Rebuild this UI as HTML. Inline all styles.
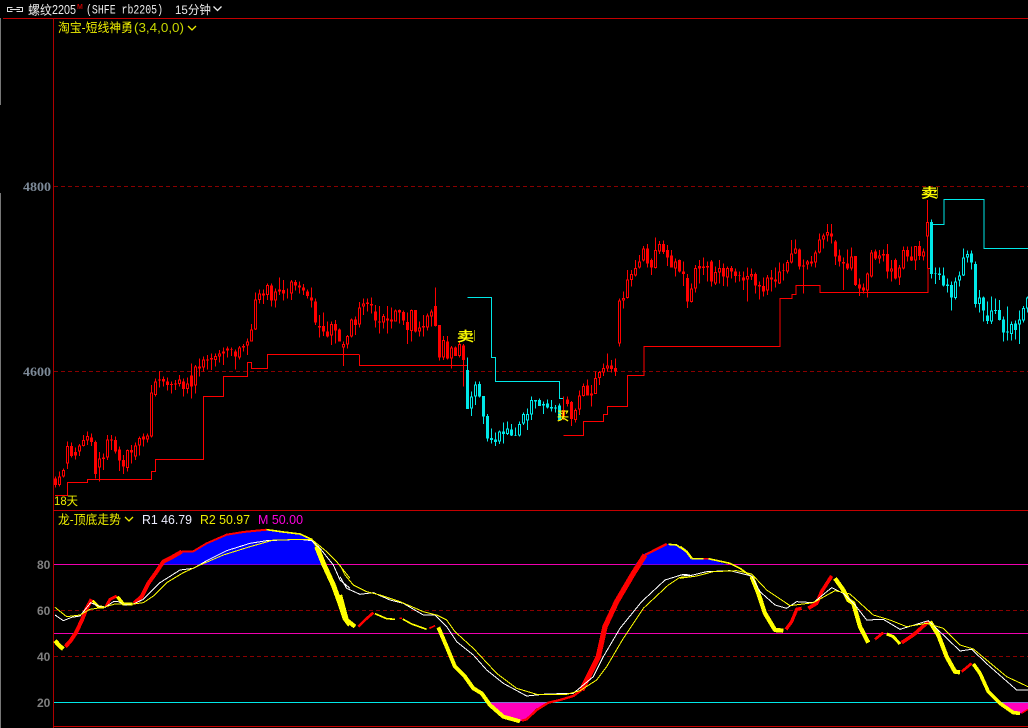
<!DOCTYPE html>
<html><head><meta charset="utf-8"><style>
html,body{margin:0;padding:0;background:#000;width:1028px;height:728px;overflow:hidden}
svg{display:block}
text{font-family:"Liberation Sans","WenQuanYi Zen Hei","Noto Sans CJK SC",sans-serif;white-space:pre}
.m{font-family:"Liberation Mono","WenQuanYi Zen Hei",monospace}
.s{font-family:"Liberation Serif",serif;font-weight:bold}
.w{stroke-width:3;fill:none}
.b{stroke-width:9;fill:none}
.h{stroke-width:3;fill:none;stroke:#000}
.l{fill:none;stroke-width:3}
</style></head><body>
<svg width="1028" height="728" viewBox="0 0 1028 728" xmlns="http://www.w3.org/2000/svg">
<rect width="1028" height="728" fill="#000"/>
<path d="M.5 18V105M.5 193V728" stroke="#777" stroke-width="1"/>
<path d="M3 18.5H1028" stroke="#c40000" stroke-width="1"/>
<path d="M53.5 18V728" stroke="#b00000" stroke-width="1"/>
<path d="M53 510.5H1028M53 726.5H1028" stroke="#c40000" stroke-width="1"/>
<g stroke="#8a0000" stroke-width="1" stroke-dasharray="4 3">
<path d="M54 186.5H1028M54 371.5H1028M54 610.5H1028M54 656.5H1028"/>
</g>
<path d="M54 564.5H1028M54 633.5H1028" stroke="#f000b0" stroke-width="1"/>
<path d="M54 702.5H1028" stroke="#00e8e8" stroke-width="1"/>

<g shape-rendering="crispEdges">
<g transform="translate(50.17,270) scale(.33333)">
<path class="l" stroke="#f00" d="M14 676H52V637H112V628H304V604H316V568H460V379H520V319H592V277H604V295H652V253H927"/>
<path class="w" stroke="#f00" d="M16 620V652M28 605V650M40 595V622M52 515V597M64 518V562M76 532V568M88 522V558M100 495V530M112 484V525M124 490V528M136 512V625M148 546V635M160 550V600M172 495V570M184 495V540M196 500V550M208 530V603M220 555V612M232 538V605M244 525V580M256 518V570M268 500V556M280 490V530M292 490V518M304 345V502M316 325V380M328 303V352M340 320V350M352 322V362M364 335V370M376 330V360M388 315V350M400 325V380M412 322V370M424 280V385M436 285V370M448 265V320M460 260V305M472 255V298M484 250V300M496 250V290M508 240V278M520 232V285M532 230V262M544 232V258M556 238V298M568 228V268M580 222V245M592 205V255M604 162V215M616 68V180M628 58V100M640 58V102M652 40V90M664 40V110M676 55V113M688 22V75M700 30V92M712 55V85M724 30V90M736 30V62M748 35V70M760 42V75M772 58V85M784 52V112M796 85V165M808 135V203M820 128V198M832 155V203M844 155V225M856 150V220M868 175V215"/>
<path class="b" stroke="#f00" d="M16 625V645M28 620V645M40 600V620M52 528V580M64 528V558M76 546V556M88 526V545M100 510V528M112 498V512M124 502V516M136 516V612M148 565V593M160 562V567M172 508V563M184 508V512M196 510V545M208 538V572M220 570V590M232 540V594M244 540V548M256 526V560M268 504V526M280 500V508M292 496V508M304 367V500M316 334V375M328 328V332M340 327V335M352 334V345M364 342V345M376 340V344M388 328V342M400 334V357M412 340V357M424 316V350M436 290V347M448 290V296M460 268V292M472 268V272M484 264V268M496 258V270M508 250V260M520 244V250M532 236V242M544 238V240M556 244V260M568 232V262M580 228V232M592 214V227M604 178V214M616 88V178M628 70V90M640 70V76M652 45V75M664 46V92M676 64V92M688 58V64M700 60V70M712 70V71M724 34V70M736 36V47M748 46V52M760 52V62M772 64V78M784 82V92M796 94V158M808 168V172M820 168V185M832 184V200M844 162V197M856 162V182M868 178V215"/>
<path class="h" d="M28 623V642M40 603V617M52 531V577M88 529V542M100 513V525M112 501V509M148 568V590M172 511V560M232 543V591M256 529V557M268 507V523M292 499V505M304 370V497M316 337V372M388 331V339M412 343V354M436 293V344M460 271V289M496 261V267M508 253V257M568 235V259M592 217V224M604 181V211M616 91V175M628 73V87M652 48V72M676 67V89M724 37V67M844 165V194"/>
</g>
<g transform="translate(340.17,270) scale(.33333)">
<path class="l" stroke="#f00" d="M58 253V286H382"/>
<path class="l" stroke="#00e8e8" d="M382 82H454V262H466V334H658V385H670"/>
<path class="l" stroke="#f00" d="M670 496H730V454H790V433H802V409H862V316H911V229"/>
<path class="w" stroke="#f00" d="M10 215V288M22 195V235M34 145V202M46 140V195M58 96V172M70 85V135M82 85V125M94 82V130M106 105V172M118 108V190M130 132V176M142 108V190M154 112V175M166 118V155M178 118V160M190 122V165M202 128V222M214 118V215M226 120V188M238 155V200M250 135V200M262 130V182M274 118V170M286 52V170M298 165V272M310 198V270M322 198V268M334 228V295M346 230V258M358 215V262M370 222V350M670 380V450M682 380V410M694 393V468M706 415V458M718 362V435M730 340V380M742 328V376M754 345V410M766 305V372M778 303V345M790 280V318M802 250V305M814 270V308M826 265V318M838 85V230M850 65V115M862 0V85M874 0V50M886 -30V20"/>
<path class="b" stroke="#f00" d="M10 222V232M22 198V224M34 148V200M46 148V165M58 112V164M70 100V110M82 98V102M94 102V107M106 124V152M118 154V158M130 138V158M142 145V152M154 148V155M166 122V155M178 120V128M190 126V152M202 156V180M214 120V183M226 120V185M238 172V185M250 168V172M262 136V173M274 124V140M286 108V168M298 165V262M310 210V262M322 214V266M334 232V266M346 232V258M358 222V258M370 226V270M670 420V440M682 388V402M694 396V447M706 420V450M718 376V418M730 348V378M742 346V376M754 370V377M766 324V372M778 306V324M790 294V308M802 286V296M814 286V297M826 294V304M838 92V220M850 84V92M862 28V84M874 12V30M886 -6V16"/>
<path class="h" d="M10 225V229M22 201V221M34 151V197M58 115V161M70 103V107M130 141V155M166 125V152M214 123V180M238 175V182M262 139V170M274 127V137M310 213V259M334 235V263M358 225V255M718 379V415M706 423V447M730 351V375M754 373V374M766 327V369M778 309V321M790 297V305M802 289V293M838 95V217M850 87V89M862 31V81M874 15V27M886 -3V13"/>
<path class="w" stroke="#00e8e8" d="M382 262V417M394 365V438M406 335V405M418 335V382M430 378V462M442 432V515M454 475V520M466 488V528M478 482V522M490 458V520M502 455V495M514 462V498M526 472V498M538 455V500M550 428V465M562 415V480M574 380V450M586 390V415M598 385V408M610 395V432M622 388V415M634 390V425M646 405V428M658 400V452"/>
<path class="b" stroke="#00e8e8" d="M382 300V417M394 380V416M406 344V380M418 342V380M430 378V440M442 438V506M454 504V510M466 508V516M478 484V515M490 484V492M502 475V492M514 478V496M526 495V497M538 462V497M550 432V460M562 432V452M574 390V434M586 390V395M598 390V408M610 402V407M622 400V412M634 411V416M646 412V415M658 406V450"/>
<path class="h" d="M394 383V413M406 347V377M478 487V512M502 478V489M538 465V494M550 435V457M562 435V449M574 393V431"/>
</g>
<g transform="translate(610.5,180) scale(.33333)">
<path class="l" stroke="#f00" d="M100 585V499H508V355H544V343H556V316H628V337H952V265H964"/>
<path class="l" stroke="#00e8e8" d="M964 133H1000V58H1120V205H1254"/>
<path class="w" stroke="#f00" d="M87 225V265M99 198V245M111 192V262M123 235V285M135 172V265M147 183V222M159 182V222M171 195V258M183 210V262M195 235V290M207 238V278M219 245V318M231 282V384M243 310V368M255 255V338M267 240V310M279 232V285M291 245V305M303 240V320M315 260V315M327 240V310M339 250V318M351 260V320M363 258V295M375 265V308M387 275V305M399 275V330M411 262V365M423 265V300M435 278V340M447 305V358M459 292V350M471 285V345M483 270V335M495 262V322M507 248V312M519 250V302M531 240V280M543 180V250M555 178V222M567 205V268M579 238V340M591 240V268M603 228V260M615 212V262M627 160V220M639 160V205M651 132V185M663 132V190M675 180V255M687 208V260M699 232V330M711 208V270M723 202V272M735 228V318M747 295V348M759 310V340M771 278V352M783 210V292M795 208V240M807 210V250M819 208V245M831 192V296M843 240V305M855 236V298M867 255V315M879 200V268M891 200V245M903 200V243M915 198V270M927 183V240M939 205V242M951 60V265"/>
<path class="b" stroke="#f00" d="M87 244V262M99 205V242M111 205V250M123 240V263M135 210V264M147 192V214M159 192V216M171 210V232M183 226V262M195 244V265M207 240V274M219 274V282M231 294V365M243 325V366M255 264V326M267 258V266M279 260V264M291 258V263M303 244V305M315 276V310M327 264V278M339 264V290M351 264V292M363 264V274M375 274V288M387 285V287M399 292V302M411 288V298M423 282V290M435 282V317M447 315V320M459 318V335M471 292V332M483 292V298M495 298V304M507 275V310M519 270V272M531 246V274M543 220V248M555 205V220M567 208V260M579 256V260M591 244V254M603 244V250M615 218V248M627 178V218M639 166V178M651 156V166M663 160V170M675 184V230M687 226V245M699 246V250M711 250V266M723 230V266M735 228V315M747 313V326M759 322V332M771 280V332M783 218V290M795 214V236M807 226V235M819 222V226M831 222V275M843 265V275M855 240V296M867 262V292M879 210V265M891 210V230M903 230V242M915 198V242M927 198V228M939 214V230M951 126V170"/>
<path class="h" d="M87 247V259M99 208V239M135 213V261M147 195V211M195 247V262M243 328V363M255 267V323M315 279V307M327 267V275M351 267V289M411 291V295M423 285V287M471 295V329M507 278V307M531 249V271M543 223V245M555 208V217M591 247V251M615 221V245M627 181V215M639 169V175M651 159V163M723 233V263M771 283V329M783 221V287M807 229V232M843 268V272M867 265V289M879 213V262M915 201V239M939 217V227M951 129V167"/>
<path class="w" stroke="#00e8e8" d="M963 118V296M975 262V312M987 262V300M999 262V320M1011 295V338M1023 305V392M1035 292V358M1047 275V320M1059 205V288M1071 212V248M1083 212V268M1095 245V382M1107 330V398M1119 350V425M1131 365V432M1143 350V432M1155 355V402M1167 360V422M1179 410V485M1191 380V482M1203 425V482M1215 422V478M1227 392V492M1239 378V428M1251 350V398"/>
<path class="b" stroke="#00e8e8" d="M963 126V282M975 280V282M987 280V285M999 286V317M1011 314V318M1023 315V353M1035 305V354M1047 286V302M1059 232V287M1071 222V233M1083 220V248M1095 252V372M1107 352V372M1119 352V392M1131 406V423M1143 392V425M1155 390V393M1167 390V420M1179 418V458M1191 454V458M1203 432V462M1215 430V450M1227 418V434M1239 384V422M1251 352V385"/>
<path class="h" d="M1035 308V351M1047 289V299M1059 235V284M1071 225V230M1107 355V369M1143 395V422M1203 435V459M1227 421V431M1239 387V419M1251 355V382"/>
</g>
</g>

<g transform="translate(0,490) scale(.33333)" fill="none" stroke-linejoin="round" shape-rendering="crispEdges">
<polygon fill="#00f" points="488,223 510,205 545,185 580,183 620,160 680,133 730,125 800,118 850,127 900,133 935,150 960,200 972,223"/>
<path d="M165 452L178 467L190 477" stroke="#ff0" stroke-width="13"/>
<path d="M196 470L212 452L228 428L245 392L260 355L275 328" stroke="#f00" stroke-width="12"/>
<path d="M278 332L295 350L312 352" stroke="#ff0" stroke-width="8"/>
<path d="M318 350L330 328L350 318" stroke="#f00" stroke-width="9"/>
<path d="M352 320L370 342L398 342" stroke="#ff0" stroke-width="10"/>
<path d="M402 340L425 320L445 280L470 245L490 215L510 205L545 185" stroke="#f00" stroke-width="12"/>
<path d="M545 184L580 184L620 160L680 134L730 126L800 119" stroke="#f00" stroke-width="6"/>
<path d="M800 119L850 126L900 132L935 148L950 170" stroke="#ff0" stroke-width="5"/>
<path d="M950 170L970 220L1000 285L1020 340L1035 385L1050 405" stroke="#ff0" stroke-width="15"/>
<path d="M165 375L190 392L215 382L240 378L272 338L300 350L315 352L340 335L355 335L375 345L400 342L430 328L480 278L540 240L580 235L620 212L680 182L750 160L800 152L900 148L935 152L960 175L1000 225L1020 270L1050 295" stroke="#fff" stroke-width="3"/>
<path d="M165 352L200 380L240 375L270 358L310 352L345 342L400 342L430 338L460 318L500 278L550 248L600 225L670 195L750 170L820 150L935 148L980 185L1010 215L1050 265" stroke="#ff0" stroke-width="3"/>
</g>
<g transform="translate(340,520) scale(.33333)" fill="none" stroke-linejoin="round" shape-rendering="crispEdges">
<polygon fill="#f0b" points="450,547 625,547 590,565 555,600 540,604 490,590 465,565"/>
<polygon fill="#00f" points="885,133 915,100 980,72 1000,72 1030,90 1050,115 1068,133"/>
<path d="M0 225L20 300L45 320" stroke="#ff0" stroke-width="13"/>
<path d="M55 320L75 300L100 278" stroke="#f00" stroke-width="8"/>
<path d="M105 281L140 296L165 298" stroke="#ff0" stroke-width="5"/>
<path d="M178 295H186" stroke="#f00" stroke-width="4"/>
<path d="M188 297L215 312L260 328" stroke="#ff0" stroke-width="5"/>
<path d="M268 325L285 317" stroke="#f00" stroke-width="5"/>
<path d="M295 322L320 380L345 440L375 470L400 505L425 520L450 555L490 590L540 604" stroke="#ff0" stroke-width="12"/>
<path d="M545 602L560 598L590 570L625 548L660 540L700 528L725 510" stroke="#f00" stroke-width="7"/>
<path d="M725 510L750 460L775 410L795 320L830 245L880 160L915 105" stroke="#f00" stroke-width="16"/>
<path d="M915 105L980 72" stroke="#f00" stroke-width="7"/>
<path d="M985 73L1010 75L1035 95L1050 115" stroke="#ff0" stroke-width="5"/>
<path d="M0 170L20 205L60 223L100 218L150 240L190 250L250 285L285 285L320 320L350 365L400 405L440 450L490 490L560 528L620 522L700 520L760 470L790 410L840 325L905 245L975 180L1030 163L1050 165" stroke="#fff" stroke-width="3"/>
<path d="M0 135L15 165L40 195L80 215L120 225L180 245L250 275L290 285L320 300L345 335L400 385L470 460L530 505L590 523L680 523L720 512L770 480L800 440L850 355L910 265L985 195L1020 172L1050 170" stroke="#ff0" stroke-width="3"/>
</g>
<g transform="translate(680,520) scale(.33333)" fill="none" stroke-linejoin="round" shape-rendering="crispEdges">
<polygon fill="#00f" points="0,80 15,85 35,117 80,115 140,133 0,133"/>
<polygon fill="#f0b" points="960,547 1044,547 1044,570 1025,580 1000,578"/>
<path d="M0 80L20 95L35 115" stroke="#ff0" stroke-width="7"/>
<path d="M35 116H70" stroke="#ff0" stroke-width="4"/>
<path d="M70 116H85" stroke="#f00" stroke-width="5"/>
<path d="M85 116L150 130L180 145L215 170" stroke="#ff0" stroke-width="5"/>
<path d="M215 170L235 220L255 280L285 330L310 332" stroke="#ff0" stroke-width="13"/>
<path d="M318 328L335 305L350 268L365 265" stroke="#f00" stroke-width="10"/>
<path d="M385 265L410 250L425 215L455 168" stroke="#f00" stroke-width="11"/>
<path d="M465 175L490 210L505 240L520 250L540 320L565 368" stroke="#ff0" stroke-width="13"/>
<path d="M585 358L610 338" stroke="#f00" stroke-width="8"/>
<path d="M620 342L640 350L660 372" stroke="#ff0" stroke-width="9"/>
<path d="M665 368L700 345L745 305" stroke="#f00" stroke-width="11"/>
<path d="M750 305L775 345L800 410L825 455L840 457" stroke="#ff0" stroke-width="13"/>
<path d="M845 455L875 430" stroke="#f00" stroke-width="8"/>
<path d="M880 432L900 460L925 515L960 550L1000 578L1020 580" stroke="#ff0" stroke-width="11"/>
<path d="M1025 580L1044 568" stroke="#f00" stroke-width="4"/>
<path d="M0 165L30 167L80 155L150 152L215 168L240 215L285 255L320 265L350 245L400 248L455 203L490 220L525 255L560 300L610 298L660 328L745 302L790 345L840 393L875 388L930 440L1010 510L1044 510" stroke="#fff" stroke-width="3"/>
<path d="M0 175L50 168L100 155L170 152L215 162L260 210L330 257L400 248L465 212L510 222L580 285L630 300L680 320L740 310L790 325L840 375L880 387L980 470L1044 500" stroke="#ff0" stroke-width="3"/>
</g>

<text x="457" y="341" font-size="13" fill="#ff0" stroke="#ff0" stroke-width=".4" textLength="17" lengthAdjust="spacingAndGlyphs">卖</text>
<path d="M474.500 330V341" stroke="#8a8a00" stroke-width="1"/>
<text x="921" y="197.500" font-size="13" fill="#ff0" stroke="#ff0" stroke-width=".4" textLength="17" lengthAdjust="spacingAndGlyphs">卖</text>
<path d="M937.500 187V198" stroke="#8a8a00" stroke-width="1"/>
<text x="557" y="420" font-size="12" fill="#ff0" stroke="#ff0" stroke-width=".3" textLength="12" lengthAdjust="spacingAndGlyphs">买</text>

<g fill="none" stroke="#ddd" stroke-width="1">
<path d="M12.500 7.500H7.500V11.500H12.500M16.500 7.500H22.500V11.500H16.500M10 9.500H20"/>
</g>
<text x="28" y="14.500" font-size="12.500" fill="#eee" textLength="24" lengthAdjust="spacingAndGlyphs">螺纹</text>
<text x="52" y="14" font-size="12.500" fill="#eee" textLength="24" lengthAdjust="spacingAndGlyphs">2205</text>
<text x="77" y="9" font-size="7" fill="#c00000" font-weight="bold">M</text>
<text x="86" y="13.500" font-size="12.500" fill="#eee" class="m" textLength="77" lengthAdjust="spacingAndGlyphs">(SHFE rb2205)</text>
<text x="175" y="14" font-size="12" fill="#eee" textLength="36" lengthAdjust="spacingAndGlyphs">15分钟</text>
<path d="M213.500 6.500L217.500 10.500L221.500 6.500" stroke="#eee" stroke-width="1.300" fill="none"/>

<text x="58" y="32" font-size="12.500" fill="#ee0" textLength="75" lengthAdjust="spacingAndGlyphs">淘宝-短线神勇</text>
<text x="134" y="32" font-size="12.500" fill="#c8d800" textLength="50" lengthAdjust="spacingAndGlyphs">(3,4,0,0)</text>
<path d="M188 26L192 30L196 26" stroke="#ee0" stroke-width="1.300" fill="none"/>

<text class="s" x="23" y="191" font-size="13" fill="#7d8a98" textLength="28" lengthAdjust="spacingAndGlyphs">4800</text>
<text class="s" x="23" y="376" font-size="13" fill="#7d8a98" textLength="28" lengthAdjust="spacingAndGlyphs">4600</text>
<text x="37" y="569" font-size="12" font-weight="bold" fill="#808080">80</text>
<text x="37" y="615" font-size="12" font-weight="bold" fill="#808080">60</text>
<text x="37" y="661" font-size="12" font-weight="bold" fill="#808080">40</text>
<text x="37" y="707" font-size="12" font-weight="bold" fill="#808080">20</text>
<text x="54" y="505" font-size="12" fill="#ee0" textLength="24" lengthAdjust="spacingAndGlyphs">18天</text>
<text x="58" y="524" font-size="12.500" fill="#ee0" textLength="63" lengthAdjust="spacingAndGlyphs">龙-顶底走势</text>
<path d="M125 517L129 521L133 517" stroke="#ee0" stroke-width="1.300" fill="none"/>
<text x="142" y="524" font-size="13" fill="#eef" textLength="50" lengthAdjust="spacingAndGlyphs">R1 46.79</text>
<text x="200" y="524" font-size="13" fill="#ee0" textLength="50" lengthAdjust="spacingAndGlyphs">R2 50.97</text>
<text x="258" y="524" font-size="13" fill="#f0d" textLength="45" lengthAdjust="spacingAndGlyphs">M 50.00</text>
</svg>
</body></html>
